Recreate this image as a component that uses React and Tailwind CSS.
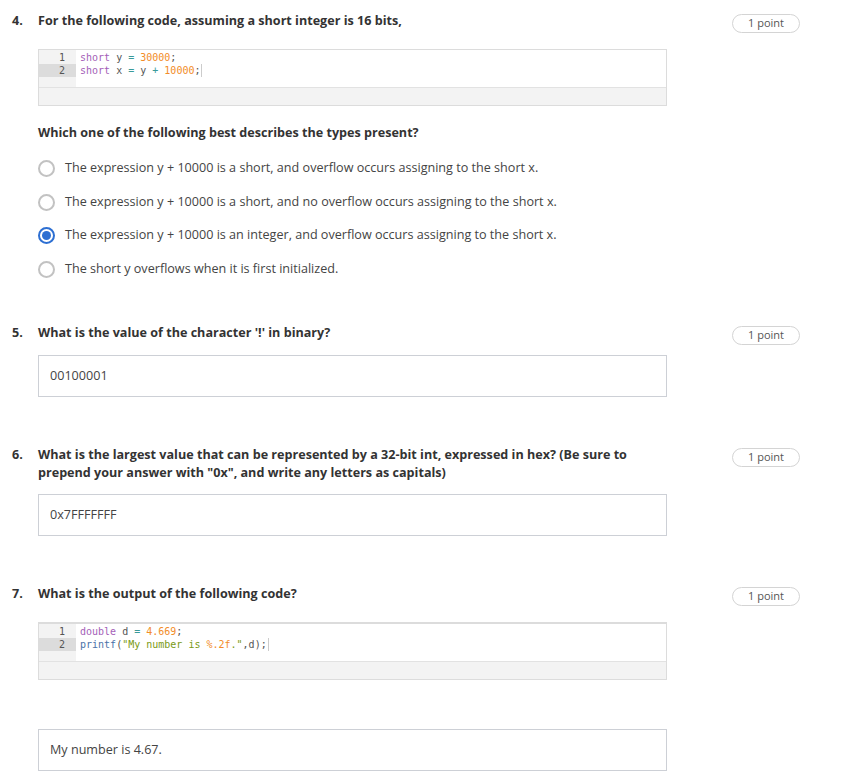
import React from "react";

const font = { fontFamily: '"Open Sans", "Liberation Sans", sans-serif' };

const PointPill = () => (
  <div className="mr-[45px] flex h-[19px] w-[68px] shrink-0 items-center justify-center rounded-full border border-[#d4d4d4] text-[11px] text-[#555]">
    1 point
  </div>
);

// Editor read-only code block
const CodeBlock = ({ lines, thick }) => (
  <div
    className={`w-[629px] border border-[#dcdcdc] bg-[#f3f3f3] ${thick ? "border-t-2" : ""}`}
  >
    <div className="flex h-[38px] border-b border-[#e2e2e2] bg-white font-['DejaVu_Sans_Mono',monospace] text-[10px] leading-[13px]">
      <div className="w-[37px] bg-[#f3f3f3] pt-[1px] text-right text-[#555]">
        {lines.map((_, i) => (
          <div
            key={i}
            className={`pr-[11px] ${i === lines.length - 1 ? "bg-[#dcdcdc]" : ""}`}
          >
            {i + 1}
          </div>
        ))}
      </div>
      <div className="pl-[4px] pt-[1px] text-[#555]">
        {lines.map((l, i) => (
          <div key={i} className="whitespace-pre">
            {l}
            {i === lines.length - 1 && (
              <span className="ml-[1px] inline-block h-[13px] w-px bg-[#ccc] align-top" />
            )}
          </div>
        ))}
      </div>
    </div>
    <div className="h-[17px]" />
  </div>
);

const kw = "text-[#a45fb8]";
const op = "text-[#3a9a9a]";
const num = "text-[#f28c28]";

const Radio = ({ checked, children }) => (
  <div className="flex h-[33.5px] items-center gap-[10px]">
    {checked ? (
      <span className="flex h-[17px] w-[17px] items-center justify-center rounded-full border-2 border-[#2d6fd2]">
        <span className="h-[9px] w-[9px] rounded-full bg-[#2d6fd2]" />
      </span>
    ) : (
      <span className="h-[17px] w-[17px] rounded-full border-2 border-[#c2c2c2]" />
    )}
    <span className="text-[12.6px] text-[#444]">{children}</span>
  </div>
);

const AnswerBox = ({ value }) => (
  <div className="flex h-[42px] w-[629px] items-center border border-[#cdd0d6] px-[11px] text-[12.6px] text-[#444]">
    {value}
  </div>
);

const Question = ({ n, title, children, className }) => (
  <div className={`flex items-start ${className}`}>
    <div className="w-[38px] pl-[12px] shrink-0 text-[12.6px] font-bold leading-[18px] text-[#333]">
      {n}.
    </div>
    <div className="w-[629px] shrink-0">
      <div className="text-[12.6px] font-bold leading-[18px] text-[#333]">{title}</div>
      {children}
    </div>
    <div className="flex flex-1 justify-end pt-[2px]">
      <PointPill />
    </div>
  </div>
);

export default function App() {
  return (
    <div className="min-h-[777px] bg-white pt-[12px]" style={font}>
      <Question n={4} title="For the following code, assuming a short integer is 16 bits,">
        <div className="mt-[19px]">
          <CodeBlock
            lines={[
              <>
                <span className={kw}>short</span> y <span className={op}>=</span>{" "}
                <span className={num}>30000</span>;
              </>,
              <>
                <span className={kw}>short</span> x <span className={op}>=</span> y{" "}
                <span className={op}>+</span> <span className={num}>10000</span>;
              </>,
            ]}
          />
        </div>
        <div className="mt-[18px] text-[12.6px] font-bold leading-[18px] text-[#333]">
          Which one of the following best describes the types present?
        </div>
        <div className="mt-[10px]">
          <Radio>The expression y + 10000 is a short, and overflow occurs assigning to the short x.</Radio>
          <Radio>The expression y + 10000 is a short, and no overflow occurs assigning to the short x.</Radio>
          <Radio checked>
            The expression y + 10000 is an integer, and overflow occurs assigning to the short x.
          </Radio>
          <Radio>The short y overflows when it is first initialized.</Radio>
        </div>
      </Question>

      <Question
        n={5}
        title="What is the value of the character '!' in binary?"
        className="mt-[38px]"
      >
        <div className="mt-[13px]">
          <AnswerBox value="00100001" />
        </div>
      </Question>

      <Question
        n={6}
        title={
          <>
            What is the largest value that can be represented by a 32-bit int, expressed in hex? (Be sure to
            <br />
            prepend your answer with "0x", and write any letters as capitals)
          </>
        }
        className="mt-[49px]"
      >
        <div className="mt-[12px]">
          <AnswerBox value="0x7FFFFFFF" />
        </div>
      </Question>

      <Question n={7} title="What is the output of the following code?" className="mt-[49px]">
        <div className="mt-[19px]">
          <CodeBlock
            thick
            lines={[
              <>
                <span className={kw}>double</span> d <span className={op}>=</span>{" "}
                <span className={num}>4.669</span>;
              </>,
              <>
                <span className="text-[#4a72a8]">printf</span>(
                <span className="text-[#7a9a14]">"My number is </span>
                <span className={num}>%.2f</span>
                <span className="text-[#7a9a14]">."</span>,d);
              </>,
            ]}
          />
        </div>
        <div className="mt-[49px]">
          <AnswerBox value="My number is 4.67." />
        </div>
      </Question>
    </div>
  );
}
